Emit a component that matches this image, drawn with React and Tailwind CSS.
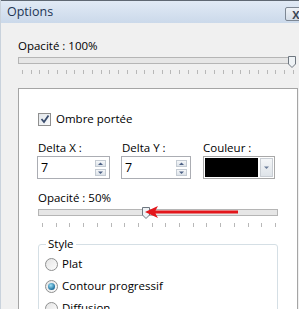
import React from "react";

const font = { fontFamily: '"Open Sans", "Noto Sans", sans-serif' };

function Ticks({ count, className }) {
  return (
    <div className={"flex justify-between " + className}>
      {Array.from({ length: count }).map((_, i) => (
        <span key={i} className="w-px h-[4px] bg-[#b8b8b8]" />
      ))}
    </div>
  );
}

function Thumb({ className }) {
  return (
    <svg className={"absolute " + className} width="8" height="12" viewBox="0 0 8 12">
      <path d="M0.5 0.5 H7.5 V8 L4 11.5 L0.5 8 Z" fill="#eef2f5" stroke="#6f7780" />
    </svg>
  );
}

function Spin() {
  return (
    <div className="flex flex-col gap-[2px] mr-[3px]">
      {["M2 4 L4.5 1.5 L7 4 Z", "M2 1.5 L4.5 4 L7 1.5 Z"].map((d, i) => (
        <div key={i} className="w-[11px] h-[7px] border border-[#c4cbd3] bg-gradient-to-b from-[#f5f7f9] to-[#dde3e9] flex items-center justify-center">
          <svg width="9" height="5" viewBox="0 0 9 5"><path d={d} fill="#4d6185" /></svg>
        </div>
      ))}
    </div>
  );
}

function NumInput({ value, width }) {
  return (
    <div className={"h-[23px] border border-[#abadb3] bg-white flex items-center justify-between " + width}>
      <span className="pl-[3px] text-[12.5px]">{value}</span>
      <Spin />
    </div>
  );
}

function Radio({ checked, label }) {
  return (
    <div className="flex items-center gap-[4px] h-[22px]">
      <span className="w-[13px] h-[13px] rounded-full border border-[#8e8f8f] bg-gradient-to-br from-[#e4e4e4] to-[#fdfdfd] flex items-center justify-center">
        {checked && <span className="w-[7px] h-[7px] rounded-full bg-[radial-gradient(circle_at_40%_35%,#9fe2f8,#1d6e9c_70%,#0d3f66)]" />}
      </span>
      <span>{label}</span>
    </div>
  );
}

export default function App() {
  return (
    <div className="w-[299px] h-[309px] overflow-hidden bg-[#f0f0f0] text-[11.5px] leading-[16px] text-black border-l border-[#c9d2dc]" style={font}>
      <div className="h-[23px] border-t border-[#5f6873] bg-gradient-to-b from-[#e1eaf5] to-[#cbd9ea] flex items-center pl-[6px]">
        <span className="text-[12.5px] text-[#1e3555]">Options</span>
        <div className="ml-auto mr-[-8px] mt-[4px] w-[22px] h-[14px] border border-[#7d8794] rounded-[2px] bg-gradient-to-b from-[#eef2f7] to-[#d4dde8] flex items-center justify-center text-[11px] font-bold text-[#3b4656] leading-none">
          X
        </div>
      </div>

      <div className="pl-[17px] pr-[1px]">
        <div className="pt-[15px]">Opacité : 100%</div>
        <div className="relative mt-[3px] mr-[2px]">
          <div className="h-[7px] border border-[#b5b5b5] bg-[#e6e6e6]" />
          <Thumb className="right-[0px] top-[-1px]" />
        </div>
        <Ticks count={32} className="mt-[6px] pl-[4px] pr-[4px]" />

        <div className="mt-[14px] h-[230px] border border-[#a5a5a5] bg-white pl-[19px] pr-[19px]">
          <div className="flex items-center gap-[5px] mt-[22px]">
            <span className="w-[13px] h-[13px] border border-[#8f8f8f] bg-gradient-to-br from-[#e2e6ea] to-[#fafbfc] flex items-center justify-center">
              <svg width="10" height="10" viewBox="0 0 10 10"><path d="M1.5 5 L4 8 L8.5 1.5" fill="none" stroke="#3a4d6e" strokeWidth="1.8" /></svg>
            </span>
            <span>Ombre portée</span>
          </div>

          <div className="flex mt-[14px] ml-[-1px]">
            <div className="flex flex-col gap-[1px] w-[84px]">
              <span className="leading-[14px] pl-[1px]">Delta X :</span>
              <NumInput value="7" width="w-[73px]" />
            </div>
            <div className="flex flex-col gap-[1px] w-[82px]">
              <span className="leading-[14px] pl-[1px]">Delta Y :</span>
              <NumInput value="7" width="w-[70px]" />
            </div>
            <div className="flex flex-col gap-[1px]">
              <span className="leading-[14px]">Couleur :</span>
              <div className="h-[23px] w-[72px] border border-[#a8a8a8] bg-white flex items-center p-[1px] gap-[2px]">
                <div className="h-full flex-1 bg-black" />
                <div className="w-[13px] h-[19px] border border-[#c9ced4] bg-gradient-to-b from-[#f4f6f8] to-[#dfe4e9] flex items-center justify-center">
                  <svg width="7" height="4" viewBox="0 0 7 4"><path d="M1 0.5 L3.5 3 L6 0.5 Z" fill="#6b7d99" /></svg>
                </div>
              </div>
            </div>
          </div>

          <div className="mt-[11px]">Opacité : 50%</div>
          <div className="relative mt-[3px]">
            <div className="h-[7px] border border-[#b5b5b5] bg-[#e6e6e6]" />
            <Thumb className="left-[104px] top-[-2px]" />
            <svg className="absolute left-[105px] top-[-4px]" width="96" height="14" viewBox="0 0 96 14">
              <path d="M2 7 L15 1 L12.5 5.5 H95 V8.5 H12.5 L15 13 Z" fill="#e3161b" />
            </svg>
          </div>
          <Ticks count={18} className="mt-[7px] pl-[4px] pr-[2px]" />

          <div className="relative mt-[17px] h-[80px] border border-[#d5dfe5] rounded-[3px] pl-[6px] pt-[8px]">
            <span className="absolute top-[-9px] left-[7px] bg-white px-[2px]">Style</span>
            <Radio label="Plat" />
            <Radio checked label="Contour progressif" />
            <Radio label="Diffusion" />
          </div>
        </div>
      </div>
    </div>
  );
}
